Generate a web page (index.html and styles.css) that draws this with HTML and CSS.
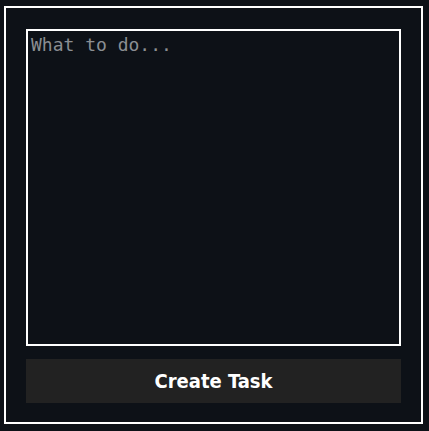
FILE: index.html
```html
<!DOCTYPE html>
<html>
<head>
<meta charset="utf-8">
<link rel="stylesheet" href="styles.css">
</head>
<body>
<div class="panel">
  <textarea class="task-input" placeholder="What to do..."></textarea>
  <button class="create-btn">Create Task</button>
</div>
</body>
</html>
```
FILE: styles.css
```css
html, body {
  margin: 0;
  padding: 0;
  background: #0d1117;
  height: 100%;
}
body {
  padding: 6px 6px 7px 4px;
  box-sizing: border-box;
}
.panel {
  box-sizing: border-box;
  width: 419px;
  height: 418px;
  border: 2px solid #ffffff;
  padding: 21px 20px 19px 20px;
  display: flex;
  flex-direction: column;
  gap: 13px;
}
.task-input {
  box-sizing: border-box;
  width: 375px;
  height: 317px;
  margin: 0;
  background: #0d1117;
  border: 2px solid #ffffff;
  padding: 3px 3px;
  color: #e6e6e6;
  font-family: "DejaVu Sans Mono", monospace;
  font-size: 18px;
  resize: none;
  outline: none;
}
.task-input::placeholder {
  color: #8b8e92;
  opacity: 1;
}
.create-btn {
  box-sizing: border-box;
  width: 375px;
  height: 44px;
  margin: 0;
  border: none;
  background: #222222;
  color: #ffffff;
  font-family: "DejaVu Sans Condensed", "DejaVu Sans", sans-serif;
  font-stretch: condensed;
  font-weight: bold;
  font-size: 20px;
  cursor: pointer;
}
```
